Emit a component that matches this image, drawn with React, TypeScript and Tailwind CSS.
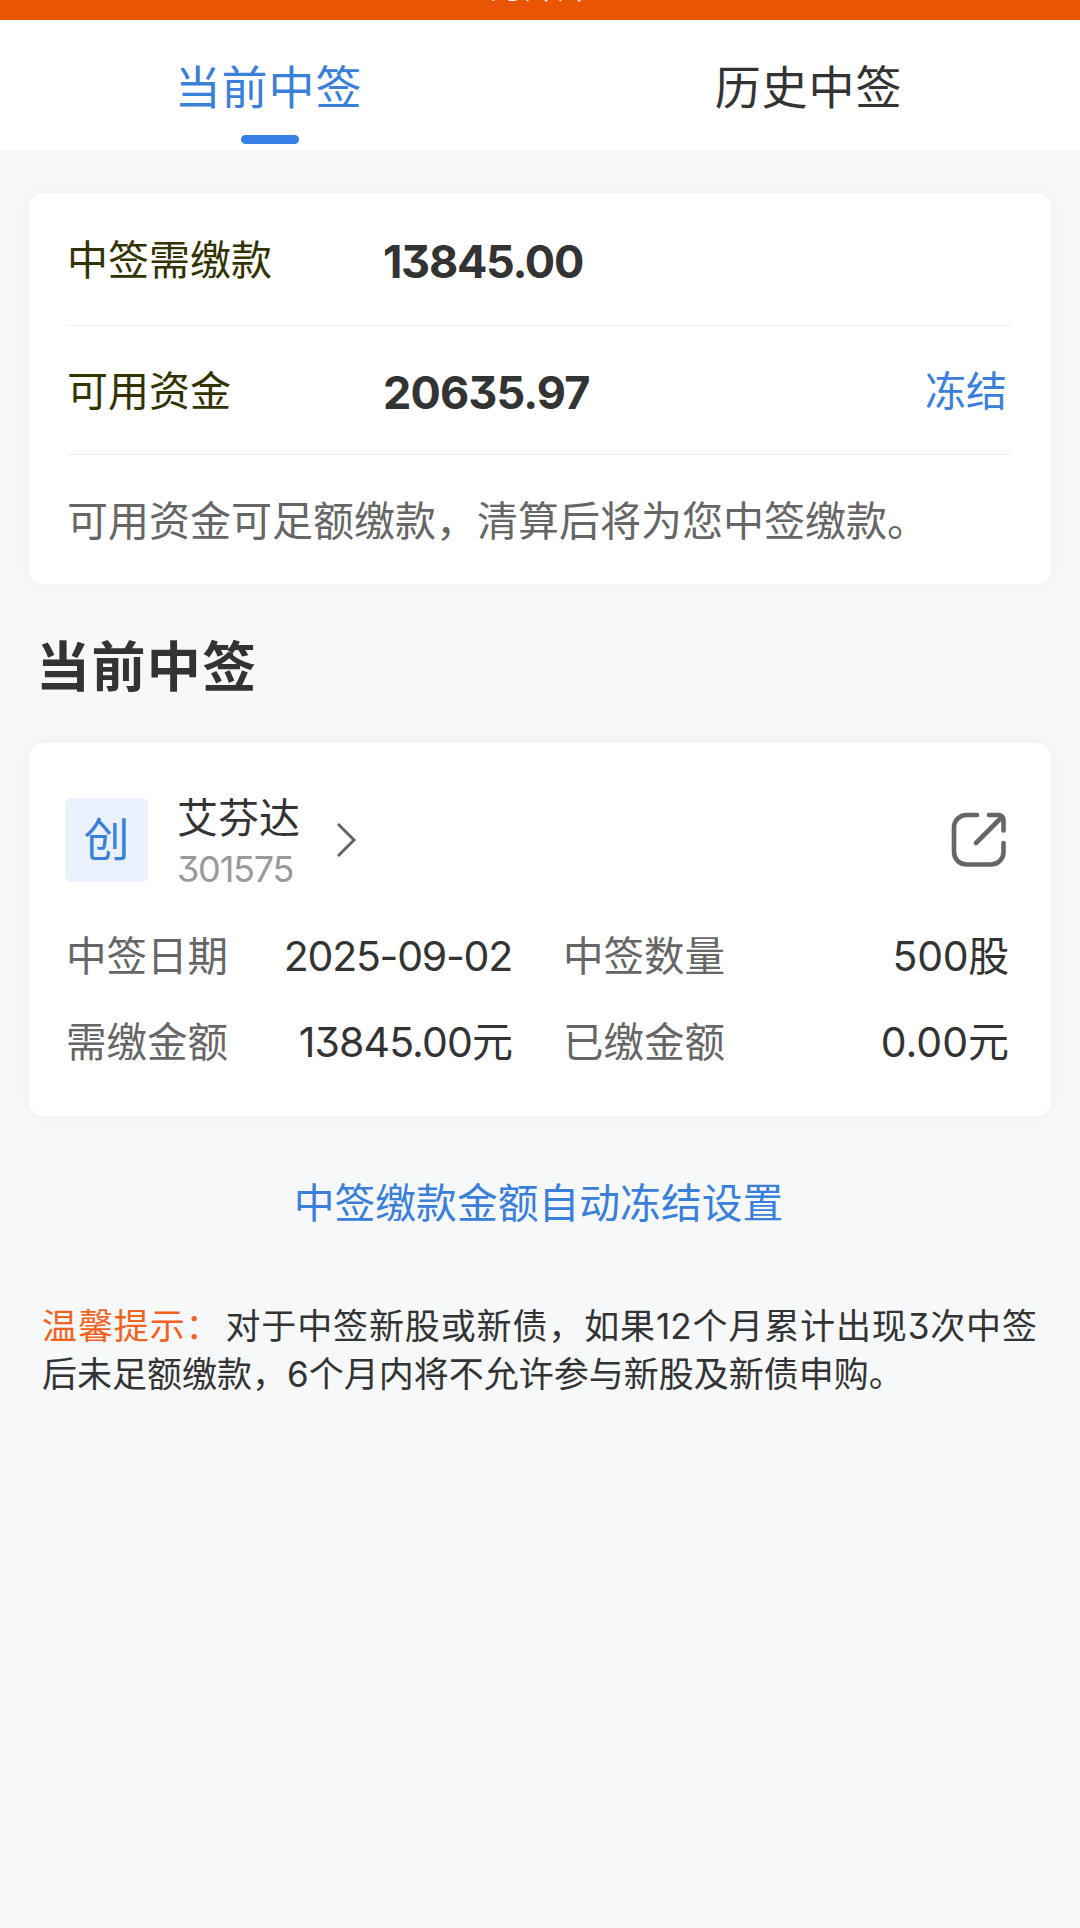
import React from 'react';

interface RecordField {
  label: string;
  value: string;
  tracking?: string;
}

const tabs = ['当前中签', '历史中签'];

const fields: RecordField[] = [
  { label: '中签日期', value: '2025-09-02', tracking: 'tracking-[-1.25px]' },
  { label: '中签数量', value: '500股', tracking: 'tracking-[-0.3px]' },
  { label: '需缴金额', value: '13845.00元', tracking: 'tracking-[-0.9px]' },
  { label: '已缴金额', value: '0.00元' },
];

const ShareIcon: React.FC = () => (
  <svg width="56" height="56" viewBox="0 0 56 56" fill="none" stroke="#666" strokeWidth="4.6" strokeLinecap="round" strokeLinejoin="round">
    <path d="M26 3H15.5C8.5 3 3 8.5 3 15.5V40C3 47 8.5 52.5 15.5 52.5H40C47 52.5 52.5 47 52.5 40V31" />
    <path d="M38 3H47.5C50.5 3 52.5 5 52.5 8V18.5" />
    <path d="M25 31L51 5" />
  </svg>
);

const TabBar: React.FC = () => (
  <nav className="flex h-[130px] bg-white">
    {tabs.map((tab, i) => (
      <div key={tab} className="flex flex-1 flex-col items-center pt-[33px]">
        <span className={`pr-[3px] text-[46px] leading-[68px] tracking-[0.9px] ${i === 0 ? 'text-[#3b80d8]' : 'text-[#333]'}`}>{tab}</span>
        {i === 0 && <div className="mt-[14px] h-[9px] w-[58px] rounded-full bg-[#3580e2]" />}
      </div>
    ))}
  </nav>
);

const FundsCard: React.FC = () => (
  <section className="mx-[29px] mt-[43px] rounded-[15px] bg-white pr-10 pl-[38px] shadow-[0_0_24px_rgba(0,0,0,0.04)]">
    <div className="flex h-[133px] items-center border-b border-[#eee]">
      <span className="w-[316px] pt-[3px] text-[41px] text-[#333300]">中签需缴款</span>
      <span className="pt-1.5 text-[45px] font-bold tracking-[-1.3px]">13845.00</span>
    </div>
    <div className="flex h-[129px] items-center border-b border-[#eee]">
      <span className="w-[316px] pt-[3px] text-[41px] text-[#333300]">可用资金</span>
      <span className="pt-1.5 text-[45px] font-bold tracking-[-0.9px]">20635.97</span>
      <span className="ml-auto pt-[3px] pr-1 text-[41px] text-[#3b80d8]">冻结</span>
    </div>
    <p className="flex h-[129px] items-center pt-[4px] text-[41px] whitespace-nowrap text-[#666]">可用资金可足额缴款，清算后将为您中签缴款。</p>
  </section>
);

const RecordCard: React.FC = () => (
  <section className="mx-[29px] h-[373px] rounded-[15px] bg-white pt-[50px] pr-10 pl-9 shadow-[0_0_24px_rgba(0,0,0,0.04)]">
    <div className="flex h-[94px] items-center">
      <div className="flex h-[84px] w-[83px] items-center justify-center rounded-[6px] bg-[#e9f2fc] pb-0.5 text-[46px] text-[#3b80d8]">创</div>
      <div className="ml-[29px] flex flex-col pt-[3px]">
        <span className="text-[41px] leading-[54px]">艾芬达</span>
        <span className="text-[36px] leading-[48px] tracking-[-1.2px] text-[#999]">301575</span>
      </div>
      <svg className="ml-[35px]" width="22" height="36" viewBox="0 0 22 36" fill="none" stroke="#666" strokeWidth="3">
        <path d="M3 2L19 18L3 34" />
      </svg>
      <div className="ml-auto pr-1">
        <ShareIcon />
      </div>
    </div>
    <div className="mt-[27px] grid grid-cols-[446px_446px] gap-x-[51px] pl-px">
      {fields.map((field) => (
        <div key={field.label} className="flex h-[86px] items-center justify-between text-[41px]">
          <span className="text-[40.5px] text-[#666]">{field.label}</span>
          <span className={field.tracking}>{field.value}</span>
        </div>
      ))}
    </div>
  </section>
);

export default function App() {
  return (
    <div lang="zh-CN" className="min-h-[1928px] w-[1080px] overflow-hidden bg-[#f7f8fa] font-[Inter,'Noto_Sans_CJK_SC',sans-serif] text-[#333] [font-feature-settings:'cv09']">
      <header className="flex h-5 items-end justify-center overflow-hidden bg-[#ea5504]">
        <span className="pb-[14px] text-[33px] leading-[40px] text-white">月开开</span>
      </header>
      <TabBar />
      <FundsCard />
      <h2 className="mt-[44px] mb-[35px] ml-[36px] text-[54px] leading-[80px] font-bold tracking-[1.4px]">当前中签</h2>
      <RecordCard />
      <div className="mt-[57px] pr-[3px] text-center text-[40.8px] leading-[60px] text-[#3b80d8]">中签缴款金额自动冻结设置</div>
      <p className="mt-[69px] ml-[42px] w-[995px] text-justify text-[35px] leading-[48px]">
        <span className="mr-1 text-[#f26322]">温馨提示：</span>对于中签新股或新债，如果12个月累计出现3次中签后未足额缴款，6个月内将不允许参与新股及新债申购。
      </p>
    </div>
  );
}
